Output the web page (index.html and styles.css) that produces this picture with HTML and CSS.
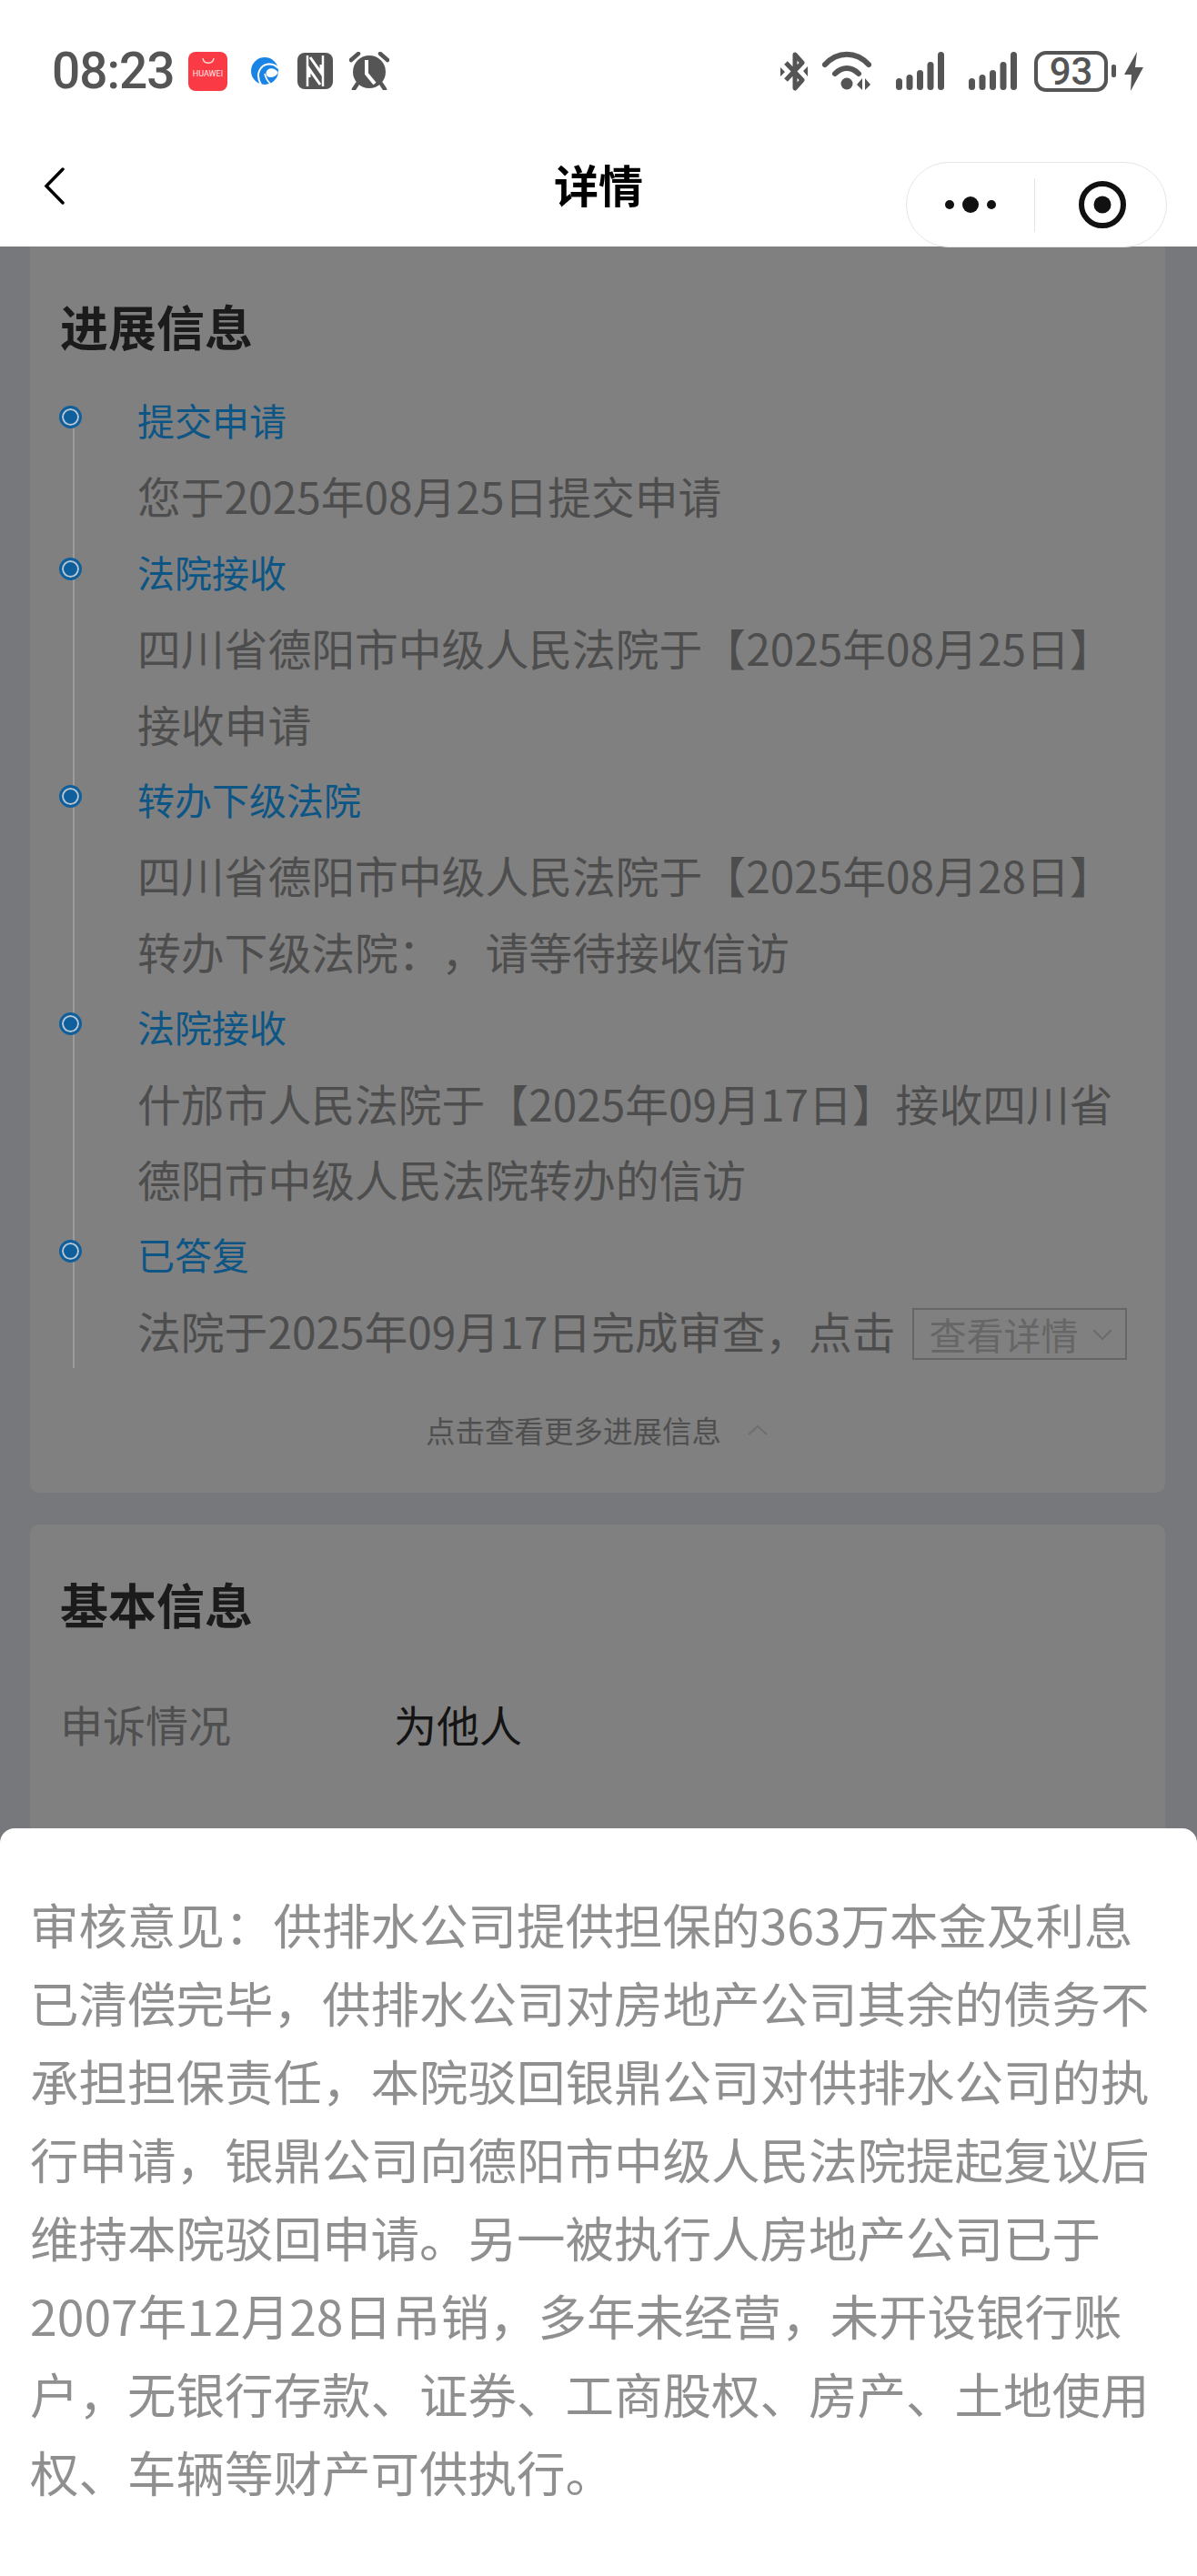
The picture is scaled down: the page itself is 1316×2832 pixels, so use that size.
FILE: index.html
```html
<!DOCTYPE html>
<html lang="zh-CN">
<head>
    <meta charset="UTF-8">
    <meta name="viewport" content="width=device-width, initial-scale=1.0">
    <title>详情</title>
    <link rel="stylesheet" href="styles.css">
</head>
<body>

    <div class="status-bar">
        <div class="status-left">
            <span class="time">08:23</span>
            <div class="app-huawei">
                <svg width="16" height="8" viewBox="0 0 16 8"><path d="M2 1c1 7 11 7 12 0" fill="none" stroke="#ffe3d6" stroke-width="1.4"/></svg>
                <span>HUAWEI</span>
            </div>
            <svg class="icon-swirl" width="30" height="30" viewBox="0 0 30 30">
                <circle cx="15" cy="15" r="15" fill="#1a84e6"/>
                <path d="M30 12C24 5 13 6 9 15c-2 5-1 10 2 15" fill="none" stroke="#fff" stroke-width="2"/>
                <path d="M30 17c-3-5-9-6-12-3-3 3-1 8 3 8 4 0 7-2 9-5z" fill="#fff"/>
                <path d="M15 18c1 4 3 8 6 11" fill="none" stroke="#fff" stroke-width="1.6"/>
            </svg>
            <svg class="icon-nfc" width="39" height="40" viewBox="0 0 39 40">
                <rect width="39" height="40" rx="8" fill="#555"/>
                <path d="M11 3v34M28 3v34" stroke="#fff" stroke-width="2.5"/>
                <path d="M14 5l12 17v-9M25 35L13 18v9" fill="none" stroke="#fff" stroke-width="3"/>
            </svg>
            <svg class="icon-alarm" width="44" height="42" viewBox="0 0 44 42">
                <circle cx="22" cy="22" r="18" fill="#555"/>
                <path d="M2 9l8-7M42 9l-8-7M9 35l-4 6M35 35l4 6" stroke="#555" stroke-width="4.5" stroke-linecap="round"/>
                <path d="M19 9v15l9 11" fill="none" stroke="#fff" stroke-width="4"/>
            </svg>
        </div>
        <div class="status-right">
            <svg width="30" height="43" viewBox="0 0 30 43">
                <path d="M6 12l18 19-8 9V3l8 9L6 31" fill="none" stroke="#555" stroke-width="5" stroke-linejoin="round"/>
                <path d="M0 17l5 5-5 5zM30 16l-5 5 5 6z" fill="#555"/>
            </svg>
            <svg width="54" height="44" viewBox="0 0 54 44">
                <path d="M3 15c14-15 34-15 48 0" fill="none" stroke="#555" stroke-width="6" stroke-linecap="round"/>
                <path d="M14 25c8-8 18-8 26 0" fill="none" stroke="#555" stroke-width="6" stroke-linecap="round"/>
                <circle cx="27" cy="36" r="6.500" fill="#555"/>
                <path d="M44 30v13l-6-6zM47 30v13l6-6z" fill="#555"/>
            </svg>
            <svg class="signal" width="53" height="42" viewBox="0 0 53 42">
                <rect x="0" y="29" width="7" height="13" rx="3.5"/>
                <rect x="11.5" y="25" width="7" height="17" rx="3.5"/>
                <rect x="23" y="20" width="7" height="22" rx="3.5"/>
                <rect x="34.5" y="11" width="7" height="31" rx="3.5"/>
                <rect x="46" y="0" width="7" height="42" rx="3.5"/>
            </svg>
            <svg class="signal" width="53" height="42" viewBox="0 0 53 42">
                <rect x="0" y="29" width="7" height="13" rx="3.5"/>
                <rect x="11.5" y="25" width="7" height="17" rx="3.5"/>
                <rect x="23" y="20" width="7" height="22" rx="3.5"/>
                <rect x="34.5" y="11" width="7" height="31" rx="3.5"/>
                <rect x="46" y="0" width="7" height="42" rx="3.5"/>
            </svg>
            <div class="battery"><span>93</span></div>
            <div class="battery-nub"></div>
            <svg class="icon-bolt" width="21" height="43" viewBox="0 0 21 43"><path d="M14 0L0 25h8L7 43l14-26h-9z" fill="#555"/></svg>
        </div>
    </div>

    <div class="nav-bar">
        <svg class="back" width="23" height="41" viewBox="0 0 23 41"><path d="M21 2L3 20.500 21 39" fill="none" stroke="#000" stroke-width="3.500" stroke-linecap="round"/></svg>
        <div class="nav-title">详情</div>
        <div class="capsule">
            <div class="capsule-part">
                <svg width="56" height="20" viewBox="0 0 56 20"><circle cx="5" cy="10" r="5" fill="#111"/><circle cx="28" cy="10" r="9" fill="#111"/><circle cx="51" cy="10" r="5" fill="#111"/></svg>
            </div>
            <div class="capsule-line"></div>
            <div class="capsule-part capsule-target">
                <svg width="52" height="52" viewBox="0 0 52 52"><circle cx="26" cy="26" r="23" fill="none" stroke="#111" stroke-width="6"/><circle cx="26" cy="26" r="9.500" fill="#111"/></svg>
            </div>
        </div>
    </div>

    <div class="page">
        <div class="card">
            <h2 class="card-title">进展信息</h2>
            <div class="timeline">
                <div class="step">
                    <div class="step-label">提交申请</div>
                    <div class="step-text">您于2025年08月25日提交申请</div>
                </div>
                <div class="step">
                    <div class="step-label">法院接收</div>
                    <div class="step-text">四川省德阳市中级人民法院于【2025年08月25日】接收申请</div>
                </div>
                <div class="step">
                    <div class="step-label">转办下级法院</div>
                    <div class="step-text">四川省德阳市中级人民法院于【2025年08月28日】转办下级法院：，请等待接收信访</div>
                </div>
                <div class="step">
                    <div class="step-label">法院接收</div>
                    <div class="step-text">什邡市人民法院于【2025年09月17日】接收四川省德阳市中级人民法院转办的信访</div>
                </div>
                <div class="step">
                    <div class="step-label">已答复</div>
                    <div class="step-text step-last">
                        法院于2025年09月17日完成审查，点击
                        <span class="detail-btn">查看详情
                            <svg width="24" height="14" viewBox="0 0 24 14"><path d="M2 2l10 10 10-10" fill="none" stroke="#6b6b6b" stroke-width="2"/></svg>
                        </span>
                    </div>
                </div>
            </div>
            <div class="more">
                <span>点击查看更多进展信息</span>
                <svg width="24" height="14" viewBox="0 0 24 14"><path d="M2 12L12 3l10 9" fill="none" stroke="#6e6e6e" stroke-width="2"/></svg>
            </div>
        </div>

        <div class="card">
            <h2 class="card-title">基本信息</h2>
            <div class="info-row">
                <span class="info-name">申诉情况</span>
                <span class="info-value">为他人</span>
            </div>
        </div>
    </div>

    <div class="sheet">审核意见：供排水公司提供担保的363万本金及利息已清偿完毕，供排水公司对房地产公司其余的债务不承担担保责任，本院驳回银鼎公司对供排水公司的执行申请，银鼎公司向德阳市中级人民法院提起复议后维持本院驳回申请。另一被执行人房地产公司已于2007年12月28日吊销，多年未经营，未开设银行账户，无银行存款、证券、工商股权、房产、土地使用权、车辆等财产可供执行。</div>

</body>
</html>
```

FILE: styles.css
```css
html, body {
    height: 2832px;
}
body {
    display: flex;
    flex-direction: column;
    margin: 0;
    position: relative;
    overflow: hidden;
    font-family: "Noto Sans CJK SC", "Noto Sans", sans-serif;
    background-color: #fff;
    text-spacing-trim: space-all;
}
.status-bar {
    height: 150px;
    box-sizing: border-box;
    padding: 6px 59px 0 57px;
    display: flex;
    justify-content: space-between;
    align-items: center;
    color: #555;
}
.status-left {
    display: flex;
    align-items: center;
}
.time {
    font-family: Roboto, sans-serif;
    font-size: 55px;
    font-weight: 500;
    letter-spacing: -1px;
    line-height: 50px;
    width: 150px;
}
.app-huawei {
    width: 43px;
    height: 43px;
    box-sizing: border-box;
    padding-top: 6px;
    background-color: #fa3a45;
    border-radius: 8px;
    color: #ffe9e6;
    display: flex;
    flex-direction: column;
    align-items: center;
}
.app-huawei span {
    font-family: Roboto, sans-serif;
    font-size: 9px;
    line-height: 14px;
    margin-top: 3px;
}
.icon-swirl {
    margin-left: 26px;
}
.icon-nfc {
    margin-left: 21px;
}
.icon-alarm {
    margin-left: 18px;
}
.status-right {
    display: flex;
    align-items: center;
}
.status-right svg {
    display: block;
}
.status-right svg + svg {
    margin-left: 16px;
}
.status-right .signal {
    fill: #555;
    margin-left: 27px;
}
.battery {
    width: 81px;
    height: 45px;
    box-sizing: border-box;
    margin-left: 19px;
    border: 4px solid #555;
    border-radius: 13px;
    display: flex;
    align-items: center;
    justify-content: center;
    font-family: Roboto, sans-serif;
    font-size: 42px;
    font-weight: 500;
    line-height: 37px;
}
.battery-nub {
    width: 5px;
    height: 14px;
    margin-left: 4px;
    background-color: #555;
    border-radius: 2px;
}
.status-right .icon-bolt {
    margin-left: 9px;
}
.nav-bar {
    height: 121px;
    box-sizing: border-box;
    padding: 28px 33px 0;
    display: grid;
    grid-template-columns: 1fr auto 1fr;
    align-items: start;
    position: relative;
    z-index: 1;
}
.back {
    margin: 6px 0 0 15px;
}
.nav-title {
    font-size: 49px;
    font-weight: 700;
    line-height: 48px;
    color: #000;
}
.capsule {
    justify-self: end;
    width: 287px;
    height: 94px;
    box-sizing: border-box;
    border: 1px solid #e6e6e6;
    border-radius: 47px;
    background-color: #fff;
    display: flex;
    align-items: center;
}
.capsule-part {
    flex: 1;
    display: flex;
    justify-content: center;
}
.capsule-target {
    padding-left: 4px;
}
.capsule-line {
    width: 1px;
    height: 59px;
    background-color: #e4e4e4;
}
.page {
    flex: 1;
    padding: 0 35px 0 33px;
    background-color: #77787c;
    display: flex;
    flex-direction: column;
    gap: 35px;
}
.card {
    background-color: #808080;
    border-radius: 0 0 10px 10px;
    padding: 52px 34px 44px 33px;
}
.card + .card {
    flex: 1;
    border-radius: 10px 10px 0 0;
}
.card-title {
    margin: 0 0 27px;
    font-size: 53px;
    font-weight: 700;
    line-height: 70px;
    color: #1b1b1b;
}
.timeline {
    position: relative;
    padding-left: 85px;
}
.timeline::before {
    content: "";
    position: absolute;
    left: 14px;
    top: 38px;
    bottom: 0;
    width: 2px;
    background-color: #9c9c9c;
}
.step {
    position: relative;
    font-size: 47.800px;
    line-height: 83.4px;
}
.step::before {
    content: "";
    position: absolute;
    left: -83px;
    top: 29px;
    width: 15px;
    height: 15px;
    border: 2px solid #b5c6d4;
    outline: 3px solid #0f5f9d;
    border-radius: 50%;
    background-color: #0f5f9d;
}
.step-label {
    color: #0c5585;
    font-size: 41px;
}
.step-text {
    color: #4d4d4d;
}
.step-last {
    display: flex;
    align-items: center;
    white-space: nowrap;
}
.detail-btn {
    margin: 8px 0 0 18px;
    width: 236px;
    height: 57px;
    box-sizing: border-box;
    padding-left: 17px;
    border: 2px solid #666;
    color: #666;
    display: flex;
    align-items: center;
    gap: 14px;
    font-size: 41px;
    line-height: 53px;
}
.more {
    margin-top: 43px;
    display: flex;
    justify-content: center;
    align-items: center;
    gap: 28px;
    font-size: 32.500px;
    line-height: 50px;
    color: #4f4f4f;
}
.card + .card .card-title {
    margin-bottom: 67px;
}
.info-row {
    display: flex;
    font-size: 47px;
    line-height: 60px;
}
.info-name {
    width: 367px;
    color: #4f4f4f;
}
.info-value {
    color: #141414;
}
.sheet {
    position: absolute;
    left: 0;
    right: 0;
    bottom: 0;
    height: 822px;
    box-sizing: border-box;
    padding: 62px 34px 0 33px;
    background-color: #fff;
    border-radius: 16px 16px 0 0;
    font-size: 53.500px;
    line-height: 86px;
    color: #8f8f8f;
}
```
